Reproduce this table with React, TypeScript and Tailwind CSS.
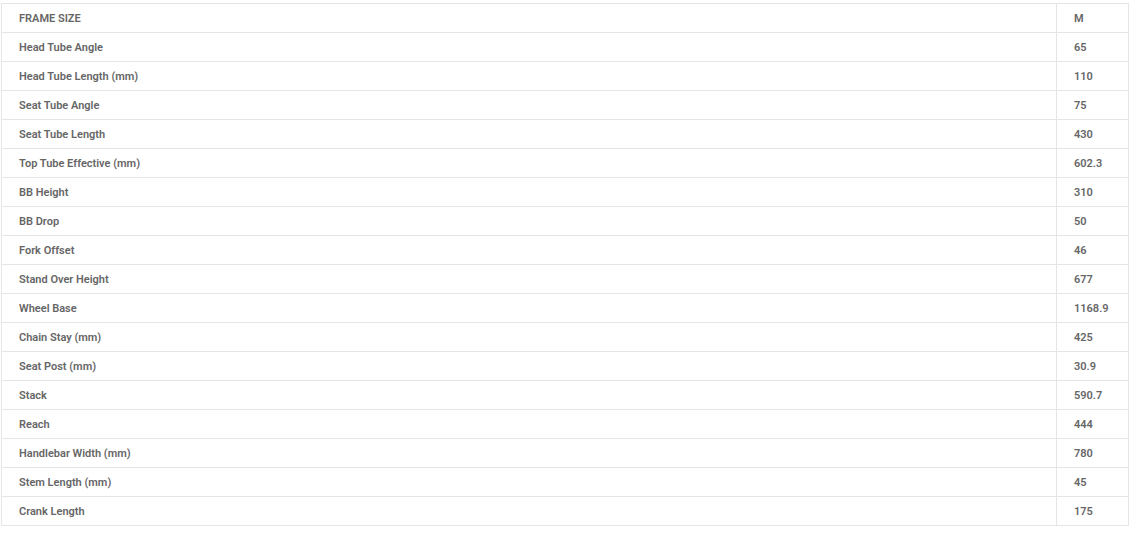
const rows: [string, string][] = [
  ["FRAME SIZE", "M"],
  ["Head Tube Angle", "65"],
  ["Head Tube Length (mm)", "110"],
  ["Seat Tube Angle", "75"],
  ["Seat Tube Length", "430"],
  ["Top Tube Effective (mm)", "602.3"],
  ["BB Height", "310"],
  ["BB Drop", "50"],
  ["Fork Offset", "46"],
  ["Stand Over Height", "677"],
  ["Wheel Base", "1168.9"],
  ["Chain Stay (mm)", "425"],
  ["Seat Post (mm)", "30.9"],
  ["Stack", "590.7"],
  ["Reach", "444"],
  ["Handlebar Width (mm)", "780"],
  ["Stem Length (mm)", "45"],
  ["Crank Length", "175"],
];

export default function App() {
  return (
    <div className="bg-white min-h-screen pt-[3px] pl-[1px] font-['Roboto',sans-serif]">
      <table className="w-[1128px] border-collapse text-[11px] font-semibold text-[#666]">
        <tbody>
          {rows.map(([label, value]) => (
            <tr key={label} className="h-[29px]">
              <td className="border border-[#e5e5e5] pl-[17px] pt-[2px] align-middle">{label}</td>
              <td className="w-[72px] border border-[#e5e5e5] pl-[17px] pt-[2px] align-middle">{value}</td>
            </tr>
          ))}
        </tbody>
      </table>
    </div>
  );
}
